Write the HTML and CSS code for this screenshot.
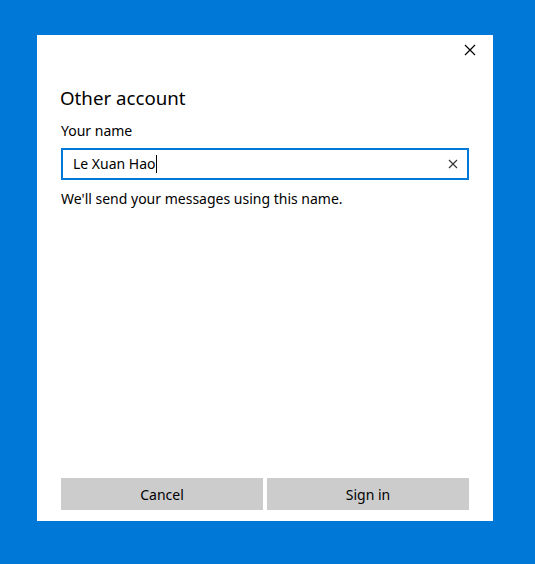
FILE: index.html
```html
<!DOCTYPE html>
<html>
<head>
<meta charset="utf-8">
<link rel="stylesheet" href="styles.css">
</head>
<body>
<div class="dialog">
  <div class="topbar">
    <button class="close" aria-label="Close">
      <svg width="12" height="12" viewBox="0 0 12 12"><path d="M1 1L11 11M11 1L1 11" stroke="#000" stroke-width="1.2" fill="none"/></svg>
    </button>
  </div>
  <h1 class="title">Other account</h1>
  <label class="label">Your name</label>
  <div class="field">
    <span class="value">Le Xuan Hao</span><span class="caret"></span>
    <span class="clear">
      <svg width="10" height="10" viewBox="0 0 10 10"><path d="M1 1L9 9M9 1L1 9" stroke="#333" stroke-width="1.1" fill="none"/></svg>
    </span>
  </div>
  <p class="hint">We'll send your messages using this name.</p>
  <div class="actions">
    <button class="btn">Cancel</button>
    <button class="btn">Sign in</button>
  </div>
</div>
</body>
</html>
```
FILE: styles.css
```css
html, body {
  margin: 0;
  padding: 0;
}
body {
  background: #0078d7;
  width: 535px;
  height: 564px;
  padding: 35px 0 0 37px;
  box-sizing: border-box;
  font-family: "Noto Sans", "Open Sans", sans-serif;
  color: #000;
}
.dialog {
  width: 456px;
  height: 486px;
  background: #fff;
  box-sizing: border-box;
  padding: 0 24px 11px 24px;
  display: flex;
  flex-direction: column;
}
.topbar {
  height: 30px;
  display: flex;
  justify-content: flex-end;
  align-items: center;
  margin-right: -13px;
}
.close {
  border: none;
  background: none;
  padding: 0;
  width: 24px;
  height: 24px;
  display: flex;
  align-items: center;
  justify-content: center;
}
.title {
  margin: 19px 0 0 -1px;
  font-size: 18.7px;
  font-weight: 400;
  line-height: 28px;
}
.label {
  margin-top: 9px;
  font-size: 14px;
  line-height: 20px;
}
.field {
  margin-top: 7px;
  height: 32px;
  border: 2px solid #0078d7;
  box-sizing: border-box;
  display: flex;
  align-items: center;
  padding: 0 9px 0 10px;
  font-size: 14px;
}
.value {
  line-height: 20px;
}
.caret {
  width: 1px;
  height: 18px;
  background: #000;
}
.clear {
  margin-left: auto;
  display: flex;
  align-items: center;
}
.hint {
  margin: 9px 0 0 0;
  font-size: 14px;
  line-height: 20px;
}
.actions {
  margin-top: auto;
  display: flex;
  gap: 4px;
}
.btn {
  flex: 1;
  height: 32px;
  border: none;
  background: #cccccc;
  font-family: inherit;
  font-size: 14px;
  color: #000;
  padding: 0;
}
```
